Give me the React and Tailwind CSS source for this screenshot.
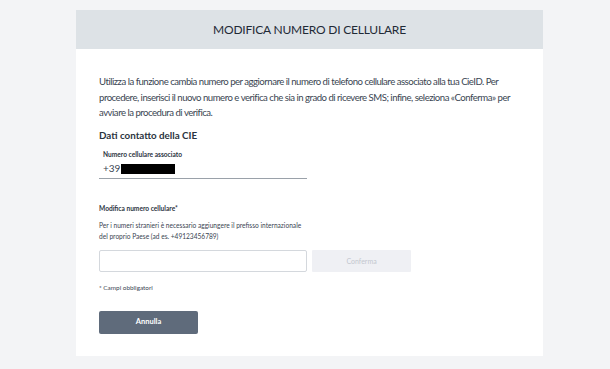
const App = () => {
  return (
    <div
      className="min-h-screen bg-[#f3f4f6] pt-[10px] pb-[13px]"
      style={{ fontFamily: "Lato, 'Noto Sans', sans-serif" }}
    >
      <div className="ml-[76px] w-[467px] bg-white">
        {/* Header */}
        <div className="h-[39px] bg-[#dde2e6] flex items-center justify-center">
          <h1 className="text-[12px] text-[#1f2a36] tracking-[-0.2px]">MODIFICA NUMERO DI CELLULARE</h1>
        </div>

        {/* Body */}
        <div className="px-[23px] pt-[25px] pb-[22px] text-[#3a4552]">
          <p className="text-[9.6px] leading-[15.5px] tracking-[-0.5px] whitespace-nowrap">
            Utilizza la funzione cambia numero per aggiornare il numero di telefono cellulare associato alla tua CieID. Per
            <br />
            procedere, inserisci il nuovo numero e verifica che sia in grado di ricevere SMS; infine, seleziona «Conferma» per
            <br />
            avviare la procedura di verifica.
          </p>

          <h2 className="mt-[7px] text-[9.8px] font-bold text-[#2b3440]">Dati contatto della CIE</h2>

          <div className="mt-[8px] w-[208px] border-b border-[#9aa1a9] pb-[2px]">
            <div className="pl-[4px] text-[6.6px] font-bold text-[#2b3440]">Numero cellulare associato</div>
            <div className="mt-[1px] pl-[4px] flex items-center text-[10px] text-[#3a4552]">
              <span>+39</span>
              <span className="ml-[1px] inline-block w-[54px] h-[10px] bg-black" />
            </div>
          </div>

          <div className="mt-[25px] text-[6.6px] font-bold text-[#2b3440]">Modifica numero cellulare*</div>
          <p className="mt-[6px] text-[6.6px] leading-[11px] text-[#3a4552]">
            Per i numeri stranieri è necessario aggiungere il prefisso internazionale
            <br />
            del proprio Paese (ad es. +49123456789)
          </p>

          <div className="mt-[8px] flex items-center gap-[5px]">
            <input
              type="text"
              className="w-[208px] h-[22px] border border-[#d4d8dd] rounded-[2px] outline-none px-2 text-[10px]"
            />
            <button
              disabled
              className="w-[99px] h-[22px] bg-[#eff0f4] text-[7px] text-[#c3c7cf] rounded-[1px]"
            >
              Conferma
            </button>
          </div>

          <div className="mt-[11px] text-[6.4px] text-[#3a4552]">* Campi obbligatori</div>

          <button className="mt-[18px] w-[99px] h-[23px] bg-[#5f6b7b] rounded-[2px] text-white text-[7.5px] font-bold">
            Annulla
          </button>
        </div>
      </div>
    </div>
  );
};

export default App;
